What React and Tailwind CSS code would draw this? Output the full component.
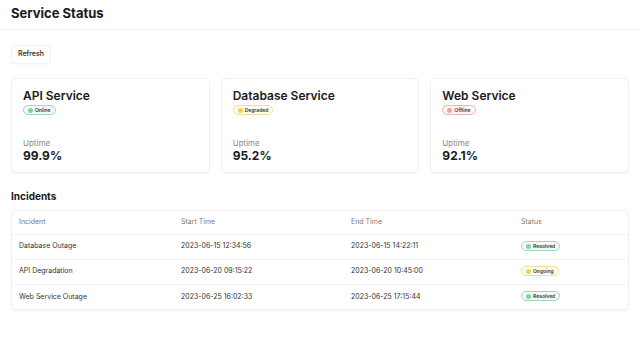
const services = [
  { name: "API Service", status: "Online", uptime: "99.9%", tone: "green" },
  { name: "Database Service", status: "Degraded", uptime: "95.2%", tone: "yellow" },
  { name: "Web Service", status: "Offline", uptime: "92.1%", tone: "red" },
];

const incidents = [
  { name: "Database Outage", start: "2023-06-15 12:34:56", end: "2023-06-15 14:22:11", status: "Resolved" },
  { name: "API Degradation", start: "2023-06-20 09:15:22", end: "2023-06-20 10:45:00", status: "Ongoing" },
  { name: "Web Service Outage", start: "2023-06-25 16:02:33", end: "2023-06-25 17:15:44", status: "Resolved" },
];

function Badge({ label, tone }) {
  const styles = {
    green: "border-[#9ad9b5] bg-[#f2fbf6]",
    yellow: "border-[#eedf9a] bg-[#fffcef]",
    red: "border-[#eeb0b0] bg-[#fff6f6]",
  };
  const dots = {
    green: "bg-[#7fd4a4]",
    yellow: "bg-[#f2d54c]",
    red: "bg-[#f0a0a0]",
  };
  return (
    <span className={"inline-flex items-center gap-[2px] h-[10px] px-[4px] rounded-full border text-[5px] font-semibold text-[#333] leading-none " + styles[tone]}>
      <span className={"w-[5px] h-[5px] rounded-full " + dots[tone]}></span>
      {label}
    </span>
  );
}

function ServiceCard({ s }) {
  return (
    <div className="flex-1 h-[95px] rounded-[4px] border border-[#f0f0f0] shadow-[0_1px_2px_rgba(0,0,0,0.04)] px-[11px] pt-[9px] flex flex-col">
      <div className="text-[12px] font-semibold text-[#1a1a1a] leading-[16px]">{s.name}</div>
      <div className="mt-[1px] flex">
        <Badge label={s.status} tone={s.tone} />
      </div>
      <div className="mt-[23px] text-[8px] text-[#8a8a8a] leading-[10px]">Uptime</div>
      <div className="text-[12px] font-bold text-[#1a1a1a] leading-[16px]">{s.uptime}</div>
    </div>
  );
}

export default function App() {
  return (
    <div className="w-[640px] h-[357px] bg-white text-[#222] font-['Inter','Noto_Sans',sans-serif]">
      <div className="h-[30px] border-b border-[#f3f3f3] px-[11px] flex items-center">
        <h1 className="text-[13px] font-bold text-[#1a1a1a] -mt-[2px]">Service Status</h1>
      </div>
      <div className="px-[11px]">
        <button className="mt-[15px] h-[19px] px-[6px] rounded-[3px] border border-[#f0f0f0] shadow-[0_1px_1px_rgba(0,0,0,0.03)] text-[7px] font-medium text-[#222]">
          Refresh
        </button>
        <div className="mt-[14px] flex gap-[11px]">
          {services.map(s => <ServiceCard key={s.name} s={s} />)}
        </div>
        <h2 className="mt-[16px] text-[10px] font-bold text-[#1a1a1a] leading-[14px]">Incidents</h2>
        <div className="mt-[7px] rounded-[4px] border border-[#f0f0f0] shadow-[0_1px_2px_rgba(0,0,0,0.04)]">
          <table className="w-full text-[7px] text-left">
            <thead>
              <tr className="h-[23px] text-[#7a7a7a]">
                <th className="font-normal pl-[7px] w-[169px]">Incident</th>
                <th className="font-normal w-[170px]">Start Time</th>
                <th className="font-normal w-[170px]">End Time</th>
                <th className="font-normal">Status</th>
              </tr>
            </thead>
            <tbody className="text-[#333]">
              {incidents.map(i => (
                <tr key={i.start} className="h-[25px] border-t border-[#f0f0f0]">
                  <td className="pl-[7px]">{i.name}</td>
                  <td>{i.start}</td>
                  <td>{i.end}</td>
                  <td>
                    <Badge label={i.status} tone={i.status === "Resolved" ? "green" : "yellow"} />
                  </td>
                </tr>
              ))}
            </tbody>
          </table>
        </div>
      </div>
    </div>
  );
}
